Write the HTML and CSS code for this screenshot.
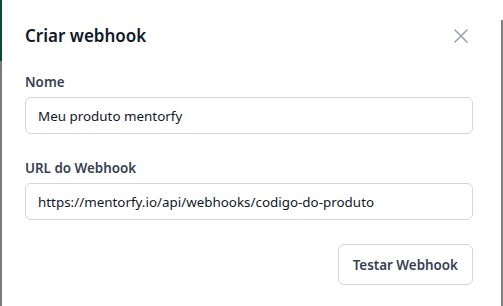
FILE: index.html
```html
<!DOCTYPE html>
<html lang="pt-BR">
<head>
    <meta charset="UTF-8">
    <meta name="viewport" content="width=device-width, initial-scale=1.0">
    <title>Criar webhook</title>
    <link rel="stylesheet" href="styles.css">
</head>
<body>

<div class="backdrop">
    <div class="edge edge-left"></div>

    <!-- Modal de criação de webhook -->
    <div class="modal">
        <div class="modal-header">
            <h2>Criar webhook</h2>
            <button type="button" class="close" aria-label="Fechar">
                <svg width="16" height="16" viewBox="0 0 16 16" fill="none" stroke="currentColor" stroke-width="1.6" stroke-linecap="round">
                    <path d="M2 2 L14 14 M14 2 L2 14"/>
                </svg>
            </button>
        </div>

        <div class="form-section">
            <label for="nome">Nome</label>
            <input type="text" id="nome" name="nome" value="Meu produto mentorfy">
        </div>

        <div class="form-section">
            <label for="url">URL do Webhook</label>
            <input type="text" id="url" name="url" value="https://mentorfy.io/api/webhooks/codigo-do-produto">
        </div>

        <div class="button-container">
            <button type="button" class="btn-secondary">Testar Webhook</button>
        </div>
    </div>

    <div class="edge edge-right"></div>
</div>

</body>
</html>
```

FILE: styles.css
```css
body {
    margin: 0;
    font-family: "Noto Sans", "Open Sans", sans-serif;
    background-color: #808080;
}

.backdrop {
    display: flex;
    height: 306px;
}

.edge {
    width: 2px;
    flex-shrink: 0;
}

.edge-left {
    background: linear-gradient(to bottom, #0b4a36 0, #0b4a36 61px, #7a7a7a 61px);
}

.edge-right {
    background: linear-gradient(to bottom, #ffffff 0, #ffffff 20px, #7f7f7f 20px);
}

.modal {
    flex: 1;
    background-color: #fff;
    padding: 24px 28px 0 23px;
    box-sizing: border-box;
}

.modal-header {
    display: flex;
    justify-content: space-between;
    align-items: center;
    height: 24px;
    margin-bottom: 24px;
}

h2 {
    margin: 0;
    font-size: 17px;
    font-weight: 600;
    color: #111827;
    line-height: 24px;
}

.close {
    background: none;
    border: none;
    padding: 0;
    margin-right: 4px;
    color: #9ca3af;
    display: flex;
    cursor: pointer;
}

label {
    display: block;
    font-size: 13.4px;
    font-weight: 600;
    color: #374151;
    line-height: 20px;
    margin-bottom: 5px;
}

input {
    width: 100%;
    height: 37px;
    box-sizing: border-box;
    padding: 0 12px;
    border: 1px solid #d1d5db;
    border-radius: 6px;
    font-family: inherit;
    font-size: 13.4px;
    color: #111827;
}

.form-section {
    margin-bottom: 24px;
}

.button-container {
    display: flex;
    justify-content: flex-end;
    margin-top: 24px;
}

.btn-secondary {
    height: 41px;
    padding: 0 14px;
    background-color: #fff;
    border: 1px solid #d1d5db;
    border-radius: 6px;
    font-family: inherit;
    font-size: 13.4px;
    font-weight: 600;
    color: #374151;
    cursor: pointer;
}
```
